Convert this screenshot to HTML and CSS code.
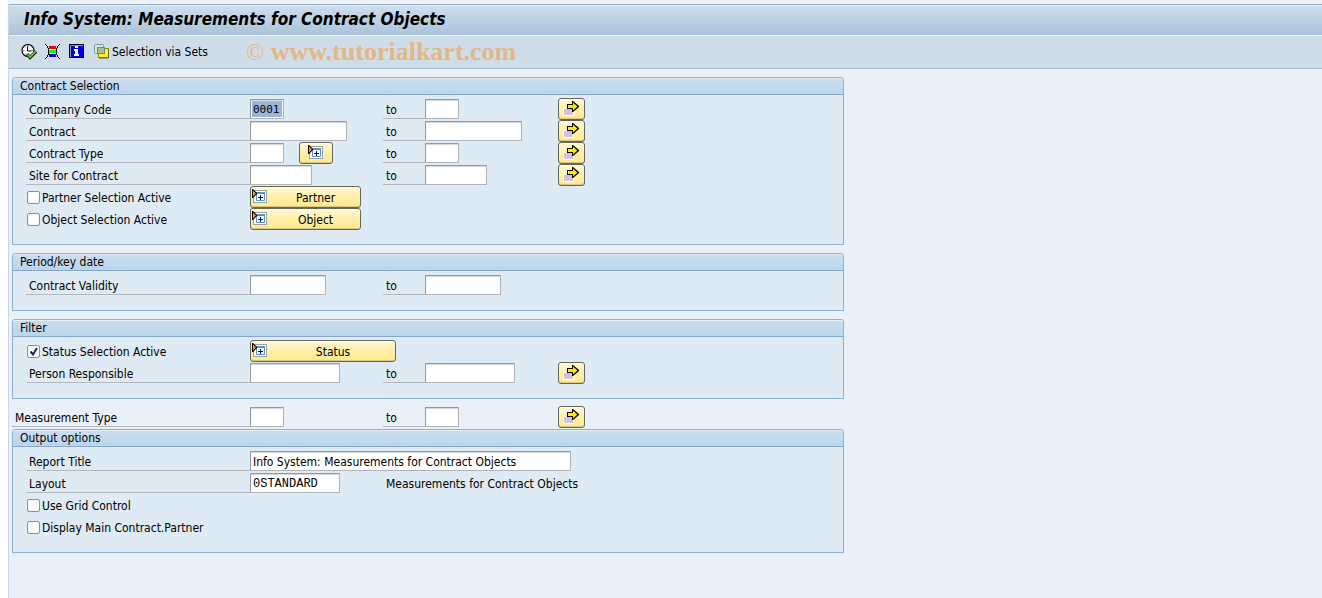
FILE: index.html
```html
<!DOCTYPE html>
<html lang="en">
<head>
<meta charset="utf-8">
<title>Info System: Measurements for Contract Objects</title>
<link rel="stylesheet" href="styles.css">
</head>
<body>
<svg class="defs" aria-hidden="true">
  <symbol id="i-more" viewBox="0 0 16 16">
    <rect x="0" y="7" width="11" height="8" fill="#fff"/>
    <rect x="1" y="8" width="9" height="6" fill="#d3c0dc"/>
    <path d="M4 3h5V0h1l6 5v1l-6 5H9V8H4z" fill="#000"/>
    <path d="M5 4h5V1.500l4.500 4-4.500 4V7H5z" fill="#ffe600"/>
  </symbol>
  <symbol id="i-sel" viewBox="0 0 16 15">
    <rect x="1.500" y="1.500" width="13" height="12" fill="#fff" stroke="#9aa0a4"/>
    <path d="M4.500 3.500h8v8h-8z" fill="#fff" stroke="#5a8fd0"/>
    <path d="M4 3h9v2H4z" fill="#5a8fd0"/>
    <path d="M8 6h1v5H8zM6 8h5v1H6z" fill="#0a0aa0"/>
    <path d="M0 0h1l4 4v1L1 9H0z" fill="#000"/>
    <path d="M1 1.500l3 3-3 3z" fill="#f79b1c"/>
  </symbol>
</svg>
<main class="window">
  <header class="titlebar"><h1>Info System: Measurements for Contract Objects</h1></header>
  <nav class="toolbar" aria-label="Application toolbar">
    <button type="button" class="tool" aria-label="Execute">
      <svg width="16" height="16" viewBox="0 0 16 16">
        <circle cx="7" cy="6.500" r="6" fill="#fff" stroke="#000" stroke-width="1.200"/>
        <path d="M7 1v2M7 10.500v1.500M1.500 6.500h2M10.500 6.500h2M3 2.500l1 1M11 2.500l-1 1M3 10.500l1-1" stroke="#777"/>
        <path d="M6.500 2.500v4.500h4" fill="none" stroke="#000"/>
        <path d="M6 10l3 3.500 6-6" fill="none" stroke="#123a08" stroke-width="3.400"/>
        <path d="M6.500 10.500l2.500 2.500 5.500-5.500" fill="none" stroke="#7cc242" stroke-width="1.600"/>
      </svg>
    </button>
    <button type="button" class="tool" aria-label="Get variant">
      <svg width="16" height="16" viewBox="0 0 16 16" shape-rendering="crispEdges">
        <path d="M0 0h1v1H0zM1 1h1v1H1zM2 2h1v2H2zM3 4h1v7H3zM2 11h1v2H2zM1 13h1v1H1zM0 14h1v1H0zM14 0h1v1h-1zM13 1h1v1h-1zM12 2h1v2h-1zM11 4h1v7h-1zM12 11h1v2h-1zM13 13h1v1h-1zM14 14h1v1h-1z" fill="#000"/>
        <path d="M4 2h7v3H4z" fill="#f00"/><path d="M4 6h7v3H4z" fill="#0f0"/><path d="M4 10h7v3H4z" fill="#00f"/>
      </svg>
    </button>
    <button type="button" class="tool" aria-label="Information">
      <svg width="16" height="16" viewBox="0 0 16 16" shape-rendering="crispEdges">
        <path d="M0 0h15v14H0z" fill="#000"/><path d="M1 1h13v12H1z" fill="#7d94d8"/><path d="M2 2h12v11H2z" fill="#0000e0"/>
        <path d="M6 2h3v2H6zM5 5h4v5h1v2H5v-2h1V7H5z" fill="#fff"/>
      </svg>
    </button>
    <button type="button" class="tool tool-text">
      <svg width="16" height="16" viewBox="0 0 16 16">
        <rect x=".5" y=".5" width="9" height="9" rx="1" fill="#d5e6e4" stroke="#6f9aa8"/>
        <rect x="4.500" y="4.500" width="10" height="9" fill="#ffef20" stroke="#94880c"/>
        <path d="M14.500 5v9H5" fill="none" stroke="#6e6608"/>
        <rect x="3.500" y="3.500" width="7" height="6" fill="#a8c48c" stroke="#5c8f86"/>
      </svg>
      <span>Selection via Sets</span>
    </button>
    <p class="watermark"><span>©</span> www.tutorialkart.com</p>
  </nav>

  <form class="content">
    <fieldset class="panel" aria-labelledby="h1">
      <h2 id="h1">Contract Selection</h2>
      <div class="rows">
        <div class="row"><label class="name" for="cc">Company Code</label><div class="cell"><input id="cc" class="w-s marked" value="0001"></div><label class="name" for="cc2">to</label><div class="cell"><input id="cc2" class="w-s"></div><button type="button" class="btn more" aria-label="Multiple selection: Company Code"><svg><use href="#i-more"/></svg></button></div>
        <div class="row"><label class="name" for="ct">Contract</label><div class="cell"><input id="ct" class="w-xl"></div><label class="name" for="ct2">to</label><div class="cell"><input id="ct2" class="w-xl"></div><button type="button" class="btn more" aria-label="Multiple selection: Contract"><svg><use href="#i-more"/></svg></button></div>
        <div class="row"><label class="name" for="ty">Contract Type</label><div class="cell"><input id="ty" class="w-s"><button type="button" class="btn small" aria-label="Choose contract type"><svg class="sel"><use href="#i-sel"/></svg></button></div><label class="name" for="ty2">to</label><div class="cell"><input id="ty2" class="w-s"></div><button type="button" class="btn more" aria-label="Multiple selection: Contract Type"><svg><use href="#i-more"/></svg></button></div>
        <div class="row"><label class="name" for="si">Site for Contract</label><div class="cell"><input id="si" class="w-m"></div><label class="name" for="si2">to</label><div class="cell"><input id="si2" class="w-m"></div><button type="button" class="btn more" aria-label="Multiple selection: Site for Contract"><svg><use href="#i-more"/></svg></button></div>
        <div class="row"><label class="check"><input type="checkbox"><span>Partner Selection Active</span></label><button type="button" class="btn wide"><svg class="sel"><use href="#i-sel"/></svg><span>Partner</span></button></div>
        <div class="row"><label class="check"><input type="checkbox"><span>Object Selection Active</span></label><button type="button" class="btn wide"><svg class="sel"><use href="#i-sel"/></svg><span>Object</span></button></div>
      </div>
    </fieldset>

    <fieldset class="panel" aria-labelledby="h2">
      <h2 id="h2">Period/key date</h2>
      <div class="rows">
        <div class="row"><label class="name" for="va">Contract Validity</label><div class="cell"><input id="va" class="w-d"></div><label class="name" for="va2">to</label><div class="cell"><input id="va2" class="w-d"></div></div>
      </div>
    </fieldset>

    <fieldset class="panel" aria-labelledby="h3">
      <h2 id="h3">Filter</h2>
      <div class="rows">
        <div class="row"><label class="check"><input type="checkbox" checked><span>Status Selection Active</span></label><button type="button" class="btn wide widest"><svg class="sel"><use href="#i-sel"/></svg><span>Status</span></button></div>
        <div class="row"><label class="name" for="pr">Person Responsible</label><div class="cell"><input id="pr" class="w-l"></div><label class="name" for="pr2">to</label><div class="cell"><input id="pr2" class="w-l"></div><button type="button" class="btn more" aria-label="Multiple selection: Person Responsible"><svg><use href="#i-more"/></svg></button></div>
      </div>
    </fieldset>

    <div class="row loose"><label class="name" for="mt">Measurement Type</label><div class="cell"><input id="mt" class="w-s"></div><label class="name" for="mt2">to</label><div class="cell"><input id="mt2" class="w-s"></div><button type="button" class="btn more" aria-label="Multiple selection: Measurement Type"><svg><use href="#i-more"/></svg></button></div>

    <fieldset class="panel" aria-labelledby="h4">
      <h2 id="h4">Output options</h2>
      <div class="rows">
        <div class="row"><label class="name" for="rt">Report Title</label><div class="cell span"><input id="rt" class="w-full" value="Info System: Measurements for Contract Objects"></div></div>
        <div class="row"><label class="name" for="ly">Layout</label><div class="cell"><input id="ly" class="w-l mono" value="0STANDARD"></div><span class="note">Measurements for Contract Objects</span></div>
        <div class="row"><label class="check"><input type="checkbox"><span>Use Grid Control</span></label></div>
        <div class="row"><label class="check"><input type="checkbox"><span>Display Main Contract.Partner</span></label></div>
      </div>
    </fieldset>
  </form>
</main>
</body>
</html>
```
FILE: styles.css
```css
* { box-sizing: border-box; }
body {
  margin: 0;
  padding: 4px 0 0 8px;
  background: linear-gradient(#eef2f9 0 4px, transparent 4px) 8px 0 no-repeat, #fff;
  font: 12px/16px "DejaVu Sans Condensed", "Noto Sans", sans-serif;
  color: #000;
}
.defs { display: none; }
.window {
  min-height: calc(100vh - 4px);
  border-left: 1px solid #cbd7e4;
  background: #e9f0f7;
}
.titlebar {
  height: 31px;
  padding: 0 15px;
  border-top: 1px solid #8fabc8;
  background: linear-gradient(#cfdfeb, #abc3db);
  box-shadow: inset 0 1px #e2ecf4;
}
h1 {
  margin: 0;
  font: italic bold 17px/28px "DejaVu Sans Condensed", sans-serif;
}
.toolbar {
  display: flex;
  align-items: center;
  gap: 8px;
  height: 34px;
  padding: 0 12px;
  border-top: 1px solid #eaf2f8;
  border-bottom: 1px solid #a9b8cd;
  background: #cfdde8;
}
.tool {
  display: flex;
  align-items: center;
  padding: 0;
  border: 0;
  background: none;
  font: inherit;
  color: inherit;
}
.tool-text { gap: 2px; margin-left: 1px; }
.watermark {
  margin: 0 0 0 30px;
  font: bold 26px/30px "Liberation Serif", serif;
  color: #e3b786;
  white-space: nowrap;
}
.watermark span { font-size: 24px; font-weight: normal; }

.content {
  max-width: 838px;
  padding: 8px 3px;
}
.panel {
  min-width: 0;
  margin: 0 0 8px;
  padding: 0;
  border: 1px solid #8fb0d0;
  border-radius: 3px 3px 0 0;
  background: #deeaf4;
}
h2 {
  height: 17px;
  margin: 0;
  padding-left: 7px;
  border-bottom: 1px solid #84a6c8;
  border-radius: 2px 2px 0 0;
  background: linear-gradient(#cbdef0, #bdd4e9);
  box-shadow: inset 0 1px #e4eef7;
  font: inherit;
}
.rows { padding: 3px 13px 14px; }
.row {
  display: grid;
  grid-template-columns: 224px 133px 42px 133px auto;
  justify-content: start;
  align-items: start;
  height: 22px;
}
.loose {
  grid-template-columns: 238px 133px 42px 133px auto;
  margin: -1px 0 1px;
}
.name {
  height: 21px;
  padding: 4px 0 0 3px;
  border-bottom: 1px solid #b5b9be;
}
.cell { display: flex; align-items: flex-start; }
.span { grid-column: span 4; }
.note { grid-column: span 3; padding: 4px 0 0 3px; white-space: nowrap; }
.cell input {
  height: 20px;
  margin: 1px 0 0;
  padding: 2px 2px 0;
  border: 1px solid #b0b3b8;
  border-top-color: #95989e;
  border-left-color: #95989e;
  border-radius: 1px;
  background: #fff;
  box-shadow: inset 0 1px 1px #d4d4d8;
  font: inherit;
  color: #000;
}
.cell .w-s { width: 34px; }
.cell .w-m { width: 62px; }
.cell .w-d { width: 76px; }
.cell .w-l { width: 90px; }
.cell .w-xl { width: 97px; }
.cell .w-full { width: 321px; }
.cell .mono { font-family: "Liberation Mono", monospace; }
.cell .marked {
  padding: 1px;
  background: linear-gradient(#9bb7d8, #9bb7d8) content-box, #fff;
  font: 11px/16px "DejaVu Sans Mono", monospace;
  text-indent: 1px;
}

.check {
  display: flex;
  align-items: center;
  gap: 2px;
  height: 22px;
  padding-left: 1px;
  white-space: nowrap;
}
.check span { padding-top: 2px; }
.check input {
  appearance: none;
  width: 13px;
  height: 13px;
  margin: 0;
  border: 1px solid #8e9096;
  border-radius: 2px;
  background: #fff;
  box-shadow: inset 0 0 1px #c8c8cc;
}
.check input:checked {
  background: #fff url("data:image/svg+xml,%3Csvg xmlns='http://www.w3.org/2000/svg' viewBox='0 0 11 11'%3E%3Cpath d='M2.500 5.500l2.500 3L9 2' fill='none' stroke='%23262640' stroke-width='2'/%3E%3C/svg%3E");
}

.btn {
  display: flex;
  align-items: flex-start;
  height: 22px;
  padding: 2px 1px;
  border: 1px solid #66665e;
  border-radius: 3px;
  background: linear-gradient(#fff9d8, #fff0a8 50%, #fde994);
  box-shadow: inset 0 -1px #d9c87c, inset 0 1px #fffdf0;
  font: inherit;
  color: inherit;
}
.btn svg { flex: none; width: 16px; height: 16px; }
.btn .sel { height: 15px; }
.more { width: 27px; padding-left: 4px; }
.small { width: 34px; margin-left: 15px; padding-left: 8px; }
.wide { width: 111px; }
.widest { width: 146px; }
.wide span { flex: 1; padding: 1px 0 0 4px; text-align: center; }
```
